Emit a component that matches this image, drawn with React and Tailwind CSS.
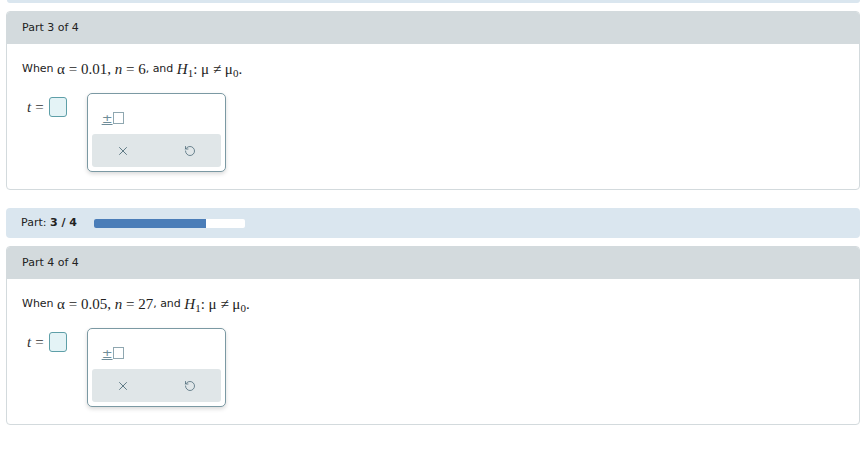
import React from "react";
import { X, RotateCcw } from "lucide-react";

const sans = { fontFamily: '"DejaVu Sans", Verdana, sans-serif' };

function M({ children, i }) {
  return (
    <span className={i ? "italic" : ""} style={{ fontFamily: '"Liberation Serif", "Times New Roman", serif' }}>
      {children}
    </span>
  );
}

function Question({ title, alpha, n }) {
  return (
    <div className="rounded-[4px] border border-[#d3dadd] bg-white">
      <div className="h-[32px] bg-[#d3dadd] rounded-t-[3px] flex items-center pl-[15px] text-[11px] text-[#222]" style={sans}>
        {title}
      </div>
      <div className="pl-[15px] pt-[16px] pb-[17px]">
        <div className="text-[11px] text-[#222] h-[18px] flex items-center" style={sans}>
          <span>When&nbsp;</span>
          <span className="text-[15px] flex items-center">
            <M>α</M>
            <M>&nbsp;=&nbsp;</M>
            <M>{alpha}</M>
          </span>
          <span className="text-[15px]"><M>,&nbsp;</M></span>
          <span className="text-[15px]"><M i>n</M><M>&nbsp;=&nbsp;{n}</M></span>
          <span>, and&nbsp;</span>
          <span className="text-[15px]">
            <M i>H</M><sub className="text-[11px] relative top-[3px]"><M>1</M></sub><M>: μ ≠ μ</M><sub className="text-[11px] relative top-[3px]"><M>0</M></sub><M>.</M>
          </span>
        </div>
        <div className="flex items-start mt-[15px]">
          <div className="flex items-center mt-[2px] ml-[5px]">
            <span className="text-[15px] text-[#333]"><M i>t</M></span>
            <span className="text-[15px] text-[#333] ml-[4px]"><M>=</M></span>
            <div className="ml-[5px] w-[18px] h-[20px] rounded-[3px] border border-[#5e9fa8] bg-[#e4f3f6]" />
          </div>
          <div className="ml-[20px] w-[139px] h-[79px] rounded-[5px] border border-[#7b99a3] bg-white shadow-[0_2px_4px_rgba(0,0,0,0.15)] flex flex-col p-[4px]">
            <div className="flex-1 flex items-center pl-[10px] pt-[4px]">
              <span className="text-[13px] text-[#6f8d99] leading-none underline decoration-[#6f8d99]" style={sans}>±</span>
              <span className="w-[11px] h-[12px] border-[1.5px] border-[#8fa7b0]" />
            </div>
            <div className="h-[33px] bg-[#e0e6e8] rounded-[3px] flex items-center justify-around text-[#4e6b78]">
              <X size={14} strokeWidth={1.5} className="mr-[4px]" />
              <RotateCcw size={12} strokeWidth={1.6} />
            </div>
          </div>
        </div>
      </div>
    </div>
  );
}

export default function App() {
  return (
    <div className="w-[861px] h-[451px] bg-white pl-[6px] pr-[1px] overflow-hidden">
      <div className="h-[3px] bg-[#dae6ef] ml-[1px] rounded-b-[3px]" />
      <div className="mt-[8px]">
        <Question title="Part 3 of 4" alpha="0.01" n="6" />
      </div>
      <div className="mt-[18px] h-[30px] bg-[#dae6ef] rounded-[4px] flex items-center pl-[15px] text-[11px] text-[#222]" style={sans}>
        <span>Part:&nbsp;</span>
        <span className="font-bold">3 / 4</span>
        <div className="ml-[17px] w-[151px] h-[9px] bg-white rounded-[2px] overflow-hidden">
          <div className="h-full bg-[#4a7db8] w-[112px]" />
        </div>
      </div>
      <div className="mt-[8px]">
        <Question title="Part 4 of 4" alpha="0.05" n="27" />
      </div>
    </div>
  );
}
